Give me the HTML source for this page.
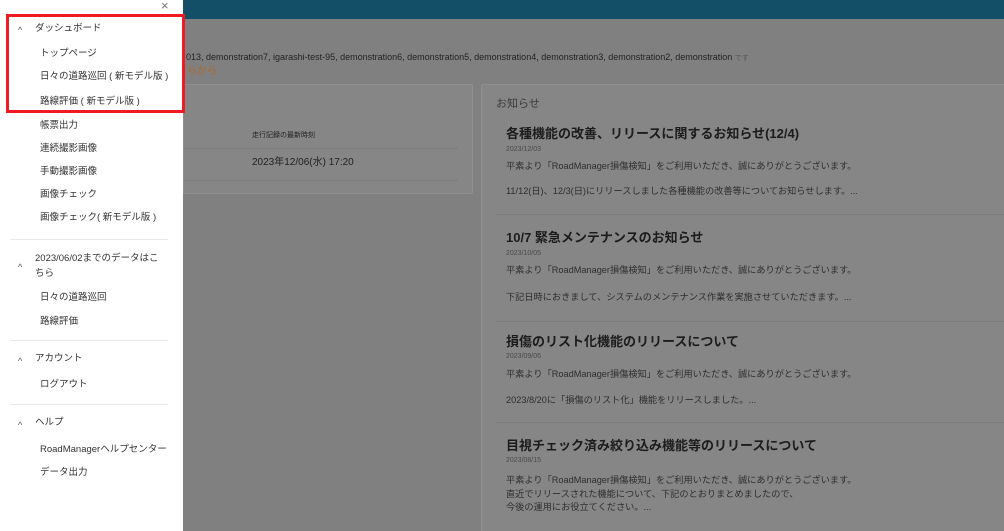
<!DOCTYPE html>
<html><head><meta charset="utf-8"><style>
*{margin:0;padding:0;box-sizing:border-box}
html,body{width:1004px;height:531px;overflow:hidden}
body{background:#808080;position:relative;font-family:"Liberation Sans","Noto Sans CJK JP",sans-serif;}
.a{position:absolute;white-space:nowrap;line-height:1}
#hdr{position:absolute;left:0;top:0;width:1004px;height:19px;background:#134f67}
#side{position:absolute;left:0;top:0;width:183px;height:531px;background:#fff}
.s{font-size:9.5px;color:#333}
.ch{font-size:9px;color:#555}
.dv{position:absolute;left:10px;width:158px;height:1px;background:#e8eaee}
#red{position:absolute;left:6px;top:14px;width:179px;height:99px;border:3px solid #f01a22}
.card{position:absolute;background:#868686;border:1px solid #909090;border-radius:2px}
.t{font-size:13px;font-weight:bold;color:#1c1c1c}
.d{font-size:7px;color:#4a4a4a}
.b{font-size:9.2px;color:#2e2e2e}
.hl{position:absolute;height:1px;background:#7c7c7c}
</style></head><body>
<div id="hdr"></div>
<div class="a" style="left:186px;top:53px;font-size:9px;color:#222">013, demonstration7, igarashi-test-95, demonstration6, demonstration5, demonstration4, demonstration3, demonstration2, demonstration <span style="font-size:7px;color:#555">です</span></div>
<div class="a" style="left:187px;top:67px;font-size:10px;color:#b0682a">らから</div>
<div class="card" style="left:183px;top:84px;width:290px;height:110px">
 <div class="a" style="left:68px;top:47px;font-size:7px;color:#222">走行記録の最新時刻</div>
 <div class="hl" style="left:0;top:63px;width:274px"></div>
 <div class="a" style="left:68px;top:73px;font-size:10px;color:#222">2023年12/06(水) 17:20</div>
 <div class="hl" style="left:0;top:95px;width:274px"></div>
</div>
<div class="card" style="left:481px;top:84px;width:540px;height:460px">
 <div class="a" style="left:14px;top:14px;font-size:11px;color:#3a3a3a">お知らせ</div>
 <div class="a t" style="left:24px;top:42px">各種機能の改善、リリースに関するお知らせ(12/4)</div>
 <div class="a d" style="left:24px;top:61px">2023/12/03</div>
 <div class="a b" style="left:24px;top:77px">平素より「RoadManager損傷検知」をご利用いただき、誠にありがとうございます。</div>
 <div class="a b" style="left:24px;top:102px">11/12(日)、12/3(日)にリリースしました各種機能の改善等についてお知らせします。...</div>
 <div class="hl" style="left:14px;top:129px;width:530px"></div>
 <div class="a t" style="left:24px;top:146px">10/7 緊急メンテナンスのお知らせ</div>
 <div class="a d" style="left:24px;top:165px">2023/10/05</div>
 <div class="a b" style="left:24px;top:181px">平素より「RoadManager損傷検知」をご利用いただき、誠にありがとうございます。</div>
 <div class="a b" style="left:24px;top:208px">下記日時におきまして、システムのメンテナンス作業を実施させていただきます。...</div>
 <div class="hl" style="left:14px;top:236px;width:530px"></div>
 <div class="a t" style="left:24px;top:250px">損傷のリスト化機能のリリースについて</div>
 <div class="a d" style="left:24px;top:268px">2023/09/06</div>
 <div class="a b" style="left:24px;top:285px">平素より「RoadManager損傷検知」をご利用いただき、誠にありがとうございます。</div>
 <div class="a b" style="left:24px;top:311px">2023/8/20に「損傷のリスト化」機能をリリースしました。...</div>
 <div class="hl" style="left:14px;top:337px;width:530px"></div>
 <div class="a t" style="left:24px;top:354px">目視チェック済み絞り込み機能等のリリースについて</div>
 <div class="a d" style="left:24px;top:372px">2023/08/15</div>
 <div class="a b" style="left:24px;top:389px;line-height:13.5px">平素より「RoadManager損傷検知」をご利用いただき、誠にありがとうございます。<br>直近でリリースされた機能について、下記のとおりまとめましたので、<br>今後の運用にお役立てください。...</div>
</div>
<div id="side">
 <div class="a" style="left:161px;top:-1px;font-size:13px;color:#777">×</div>
 <div class="a ch" style="left:18px;top:26px">^</div><div class="a s" style="left:35px;top:24px">ダッシュボード</div>
 <div class="a s" style="left:40px;top:49px">トップページ</div>
 <div class="a s" style="left:40px;top:72px">日々の道路巡回 ( 新モデル版 )</div>
 <div class="a s" style="left:40px;top:97px">路線評価 ( 新モデル版 )</div>
 <div class="a s" style="left:40px;top:121px">帳票出力</div>
 <div class="a s" style="left:40px;top:144px">連続撮影画像</div>
 <div class="a s" style="left:40px;top:167px">手動撮影画像</div>
 <div class="a s" style="left:40px;top:190px">画像チェック</div>
 <div class="a s" style="left:40px;top:213px">画像チェック( 新モデル版 )</div>
 <div class="dv" style="top:239px"></div>
 <div class="a ch" style="left:18px;top:263px">^</div>
 <div class="a s" style="left:35px;top:254px">2023/06/02までのデータはこ</div>
 <div class="a s" style="left:35px;top:269px">ちら</div>
 <div class="a s" style="left:40px;top:293px">日々の道路巡回</div>
 <div class="a s" style="left:40px;top:317px">路線評価</div>
 <div class="dv" style="top:340px"></div>
 <div class="a ch" style="left:18px;top:357px">^</div><div class="a s" style="left:35px;top:354px">アカウント</div>
 <div class="a s" style="left:40px;top:380px">ログアウト</div>
 <div class="dv" style="top:404px"></div>
 <div class="a ch" style="left:18px;top:421px">^</div><div class="a s" style="left:35px;top:418px">ヘルプ</div>
 <div class="a s" style="left:40px;top:445px">RoadManagerヘルプセンター</div>
 <div class="a s" style="left:40px;top:468px">データ出力</div>
</div>
<div id="red"></div>
</body></html>
